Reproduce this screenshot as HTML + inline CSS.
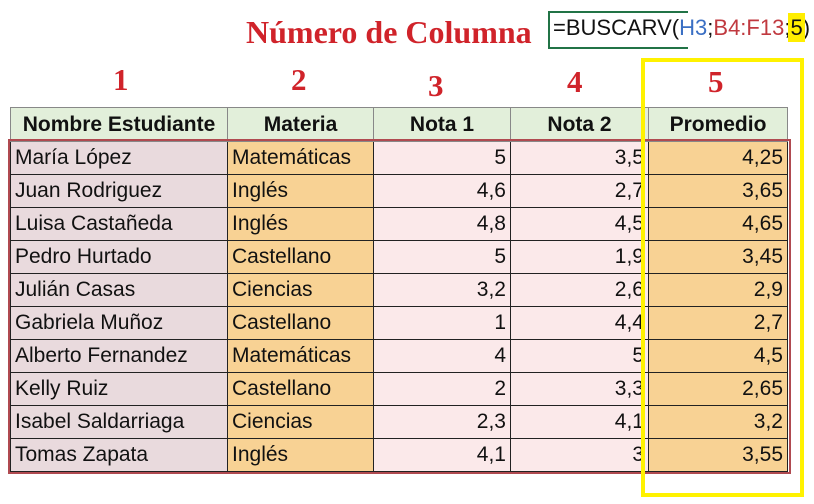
<!DOCTYPE html>
<html><head><meta charset="utf-8"><style>
body{margin:0;width:814px;height:504px;background:#fff;position:relative;overflow:hidden;font-family:"Liberation Sans",sans-serif}
.t{position:absolute;white-space:nowrap}
.red{color:#d0232a;font-family:"Liberation Serif",serif;font-weight:bold;font-size:31px}
table{position:absolute;left:10px;top:107px;border-collapse:collapse;table-layout:fixed;font-size:21px;color:#111}
td{height:32px;padding:0 4px;border:1px solid #222;white-space:nowrap;overflow:hidden;line-height:32px}
th{height:31px;border:1px solid #888;background:#e2efda;font-weight:bold;font-size:21px}
td.n{background:#e9dadd}td.m{background:#f8d294}td.x{background:#fbe9ea;text-align:right}td.p{background:#f8d294;text-align:right}
</style></head><body>
<div class="t red" style="left:246px;top:14px;font-size:32px">Número de Columna</div>
<div style="position:absolute;left:548px;top:11px;width:138px;height:34px;border:2px solid #217346;border-right:none"></div>
<div class="t" style="left:553px;top:15px;font-size:22px;color:#111">=BUSCARV(<span style="color:#3a6fc4">H3</span>;<span style="color:#c0393f">B4:F13</span>;<span style="background:#ffee00;outline:2px solid #ffee00">5</span>)</div>
<div class="t red" style="left:113px;top:62px">1</div>
<div class="t red" style="left:291px;top:62px">2</div>
<div class="t red" style="left:428px;top:68px">3</div>
<div class="t red" style="left:567px;top:64px">4</div>
<div class="t red" style="left:708px;top:64px">5</div>
<table>
<colgroup><col style="width:217px"><col style="width:146px"><col style="width:137px"><col style="width:138px"><col style="width:139px"></colgroup>
<tr><th>Nombre Estudiante</th><th>Materia</th><th>Nota 1</th><th>Nota 2</th><th>Promedio</th></tr>
<tr><td class="n">María López</td><td class="m">Matemáticas</td><td class="x">5</td><td class="x">3,5</td><td class="p">4,25</td></tr>
<tr><td class="n">Juan Rodriguez</td><td class="m">Inglés</td><td class="x">4,6</td><td class="x">2,7</td><td class="p">3,65</td></tr>
<tr><td class="n">Luisa Castañeda</td><td class="m">Inglés</td><td class="x">4,8</td><td class="x">4,5</td><td class="p">4,65</td></tr>
<tr><td class="n">Pedro Hurtado</td><td class="m">Castellano</td><td class="x">5</td><td class="x">1,9</td><td class="p">3,45</td></tr>
<tr><td class="n">Julián Casas</td><td class="m">Ciencias</td><td class="x">3,2</td><td class="x">2,6</td><td class="p">2,9</td></tr>
<tr><td class="n">Gabriela Muñoz</td><td class="m">Castellano</td><td class="x">1</td><td class="x">4,4</td><td class="p">2,7</td></tr>
<tr><td class="n">Alberto Fernandez</td><td class="m">Matemáticas</td><td class="x">4</td><td class="x">5</td><td class="p">4,5</td></tr>
<tr><td class="n">Kelly Ruiz</td><td class="m">Castellano</td><td class="x">2</td><td class="x">3,3</td><td class="p">2,65</td></tr>
<tr><td class="n">Isabel Saldarriaga</td><td class="m">Ciencias</td><td class="x">2,3</td><td class="x">4,1</td><td class="p">3,2</td></tr>
<tr><td class="n">Tomas Zapata</td><td class="m">Inglés</td><td class="x">4,1</td><td class="x">3</td><td class="p">3,55</td></tr>
</table>
<div style="position:absolute;left:8px;top:139px;width:779px;height:331px;border:2px solid #b04a50"></div>
<div style="position:absolute;left:641px;top:58px;width:155px;height:431px;border:4px solid #fff200"></div>
</body></html>
